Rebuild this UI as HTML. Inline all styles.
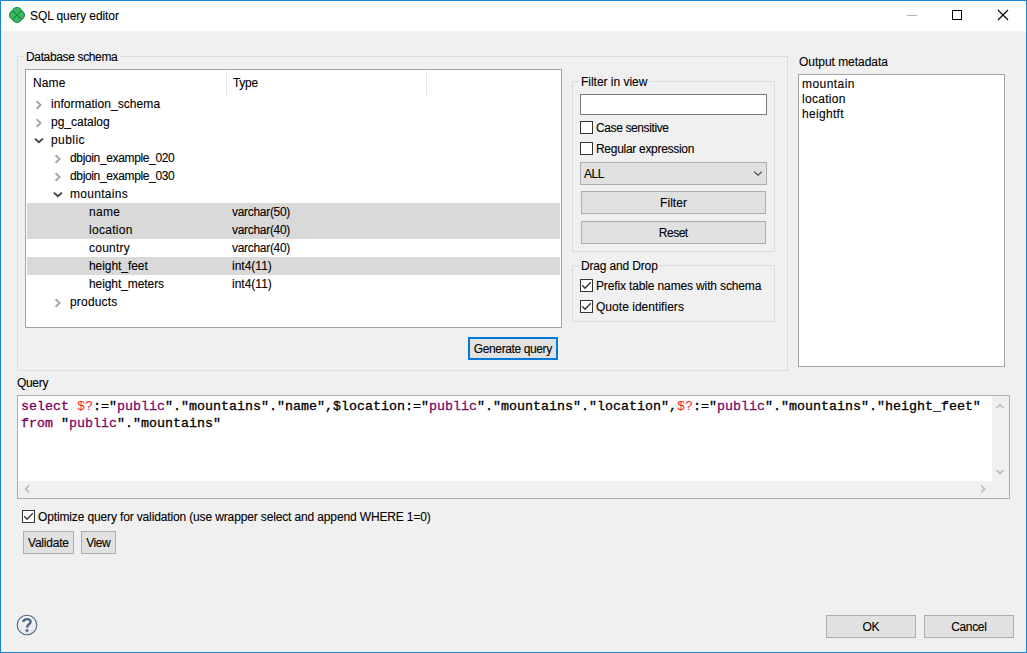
<!DOCTYPE html>
<html><head><meta charset="utf-8"><title>SQL query editor</title>
<style>
html,body{margin:0;padding:0;}
body{width:1027px;height:653px;position:relative;overflow:hidden;background:#f0f0f0;font-family:'Liberation Sans',sans-serif;font-size:12px;color:#000;-webkit-text-stroke:0.1px #000;}
</style></head><body>
<div style="position:absolute;left:1px;top:1px;width:1025px;height:30px;background:#fff"></div>
<div style="position:absolute;left:0px;top:0px;width:1027px;height:1px;background:#1883d7"></div>
<div style="position:absolute;left:0px;top:652px;width:1027px;height:1px;background:#1883d7"></div>
<div style="position:absolute;left:0px;top:0px;width:1px;height:653px;background:#1883d7"></div>
<div style="position:absolute;left:1026px;top:0px;width:1px;height:653px;background:#1883d7"></div>
<svg style="position:absolute;left:9px;top:7px" width="16" height="16" viewBox="0 0 16 16">
<g fill="#0f8a3a"><circle cx="8" cy="5.1" r="5.1"/><circle cx="8" cy="10.9" r="5.1"/><circle cx="5.1" cy="8" r="5.1"/><circle cx="10.9" cy="8" r="5.1"/></g>
<g fill="#3db662"><circle cx="8" cy="5.1" r="4.1"/><circle cx="8" cy="10.9" r="4.1"/><circle cx="5.1" cy="8" r="4.1"/><circle cx="10.9" cy="8" r="4.1"/></g>
<path d="M3.2 3.2 L12.8 12.8 M12.8 3.2 L3.2 12.8" stroke="#0f8a3a" stroke-width="1.1"/>
</svg>
<div style="position:absolute;left:30px;top:9px;font-size:12px;line-height:15px;color:#000;white-space:pre;letter-spacing:-0.093px;">SQL query editor</div>
<div style="position:absolute;left:907px;top:15px;width:10px;height:1px;background:#b4b4b4"></div>
<div style="position:absolute;left:952px;top:10px;width:10px;height:10px;border:1px solid #000;box-sizing:border-box"></div>
<svg style="position:absolute;left:997px;top:9px" width="12" height="12" viewBox="0 0 12 12"><path d="M1 1 L11 11 M11 1 L1 11" stroke="#000" stroke-width="1.1"/></svg>
<div style="position:absolute;left:17px;top:56px;width:7px;height:1px;background:#dcdcdc"></div>
<div style="position:absolute;left:120px;top:56px;width:668px;height:1px;background:#dcdcdc"></div>
<div style="position:absolute;left:17px;top:56px;width:1px;height:315px;background:#dcdcdc"></div>
<div style="position:absolute;left:787px;top:56px;width:1px;height:315px;background:#dcdcdc"></div>
<div style="position:absolute;left:17px;top:370px;width:771px;height:1px;background:#dcdcdc"></div>
<div style="position:absolute;left:26px;top:50px;font-size:12px;line-height:15px;color:#000;white-space:pre;letter-spacing:-0.357px;">Database schema</div>
<div style="position:absolute;left:25px;top:69px;width:537px;height:259px;background:#fff;border:1px solid #a0a3a8;box-sizing:border-box"></div>
<div style="position:absolute;left:226px;top:71px;width:1px;height:24px;background:#e5e5e5"></div>
<div style="position:absolute;left:426px;top:71px;width:1px;height:24px;background:#e5e5e5"></div>
<div style="position:absolute;left:33px;top:76px;font-size:12px;line-height:15px;color:#000;white-space:pre;letter-spacing:0.100px;">Name</div>
<div style="position:absolute;left:233px;top:76px;font-size:12px;line-height:15px;color:#000;white-space:pre;letter-spacing:-0.300px;">Type</div>
<svg style="position:absolute;left:34.0px;top:100px" width="9" height="10" viewBox="0 0 9 10"><path d="M2.6 1.3 L6.6 5 L2.6 8.7" fill="none" stroke="#a6a6a6" stroke-width="1.9"/></svg>
<div style="position:absolute;left:51px;top:97px;font-size:12px;line-height:15px;color:#000;white-space:pre;letter-spacing:0.059px;">information_schema</div>
<svg style="position:absolute;left:34.0px;top:118px" width="9" height="10" viewBox="0 0 9 10"><path d="M2.6 1.3 L6.6 5 L2.6 8.7" fill="none" stroke="#a6a6a6" stroke-width="1.9"/></svg>
<div style="position:absolute;left:51px;top:115px;font-size:12px;line-height:15px;color:#000;white-space:pre;letter-spacing:-0.011px;">pg_catalog</div>
<svg style="position:absolute;left:33.5px;top:137px" width="10" height="8" viewBox="0 0 10 8"><path d="M0.9 1.6 L4.9 5.2 L8.9 1.6" fill="none" stroke="#404040" stroke-width="1.9"/></svg>
<div style="position:absolute;left:51px;top:133px;font-size:12px;line-height:15px;color:#000;white-space:pre;letter-spacing:0.440px;">public</div>
<svg style="position:absolute;left:53.0px;top:154px" width="9" height="10" viewBox="0 0 9 10"><path d="M2.6 1.3 L6.6 5 L2.6 8.7" fill="none" stroke="#a6a6a6" stroke-width="1.9"/></svg>
<div style="position:absolute;left:70px;top:151px;font-size:12px;line-height:15px;color:#000;white-space:pre;letter-spacing:-0.353px;">dbjoin_example_020</div>
<svg style="position:absolute;left:53.0px;top:172px" width="9" height="10" viewBox="0 0 9 10"><path d="M2.6 1.3 L6.6 5 L2.6 8.7" fill="none" stroke="#a6a6a6" stroke-width="1.9"/></svg>
<div style="position:absolute;left:70px;top:169px;font-size:12px;line-height:15px;color:#000;white-space:pre;letter-spacing:-0.353px;">dbjoin_example_030</div>
<svg style="position:absolute;left:52.5px;top:191px" width="10" height="8" viewBox="0 0 10 8"><path d="M0.9 1.6 L4.9 5.2 L8.9 1.6" fill="none" stroke="#404040" stroke-width="1.9"/></svg>
<div style="position:absolute;left:70px;top:187px;font-size:12px;line-height:15px;color:#000;white-space:pre;letter-spacing:0.300px;">mountains</div>
<div style="position:absolute;left:27px;top:203px;width:533px;height:18px;background:#d9d9d9"></div>
<div style="position:absolute;left:89px;top:205px;font-size:12px;line-height:15px;color:#000;white-space:pre;letter-spacing:0.267px;">name</div>
<div style="position:absolute;left:232px;top:205px;font-size:12px;line-height:15px;color:#000;white-space:pre;letter-spacing:-0.300px;">varchar(50)</div>
<div style="position:absolute;left:27px;top:221px;width:533px;height:18px;background:#d9d9d9"></div>
<div style="position:absolute;left:89px;top:223px;font-size:12px;line-height:15px;color:#000;white-space:pre;letter-spacing:0.286px;">location</div>
<div style="position:absolute;left:232px;top:223px;font-size:12px;line-height:15px;color:#000;white-space:pre;letter-spacing:-0.300px;">varchar(40)</div>
<div style="position:absolute;left:89px;top:241px;font-size:12px;line-height:15px;color:#000;white-space:pre;letter-spacing:0.233px;">country</div>
<div style="position:absolute;left:232px;top:241px;font-size:12px;line-height:15px;color:#000;white-space:pre;letter-spacing:-0.300px;">varchar(40)</div>
<div style="position:absolute;left:27px;top:257px;width:533px;height:18px;background:#d9d9d9"></div>
<div style="position:absolute;left:89px;top:259px;font-size:12px;line-height:15px;color:#000;white-space:pre;letter-spacing:-0.060px;">height_feet</div>
<div style="position:absolute;left:232px;top:259px;font-size:12px;line-height:15px;color:#000;white-space:pre;letter-spacing:0.000px;">int4(11)</div>
<div style="position:absolute;left:89px;top:277px;font-size:12px;line-height:15px;color:#000;white-space:pre;letter-spacing:-0.083px;">height_meters</div>
<div style="position:absolute;left:232px;top:277px;font-size:12px;line-height:15px;color:#000;white-space:pre;letter-spacing:0.000px;">int4(11)</div>
<svg style="position:absolute;left:53.0px;top:298px" width="9" height="10" viewBox="0 0 9 10"><path d="M2.6 1.3 L6.6 5 L2.6 8.7" fill="none" stroke="#a6a6a6" stroke-width="1.9"/></svg>
<div style="position:absolute;left:70px;top:295px;font-size:12px;line-height:15px;color:#000;white-space:pre;letter-spacing:0.186px;">products</div>
<div style="position:absolute;left:572px;top:81px;width:7px;height:1px;background:#dcdcdc"></div>
<div style="position:absolute;left:649px;top:81px;width:126px;height:1px;background:#dcdcdc"></div>
<div style="position:absolute;left:572px;top:81px;width:1px;height:171px;background:#dcdcdc"></div>
<div style="position:absolute;left:774px;top:81px;width:1px;height:171px;background:#dcdcdc"></div>
<div style="position:absolute;left:572px;top:251px;width:203px;height:1px;background:#dcdcdc"></div>
<div style="position:absolute;left:581px;top:75px;font-size:12px;line-height:15px;color:#000;white-space:pre;letter-spacing:-0.023px;">Filter in view</div>
<div style="position:absolute;left:580px;top:94px;width:187px;height:21px;background:#fff;border:1px solid #7a7a7a;box-sizing:border-box"></div>
<div style="position:absolute;left:580px;top:121px;width:13px;height:13px;background:#fff;border:1px solid #333;box-sizing:border-box"></div>
<div style="position:absolute;left:596px;top:121px;font-size:12px;line-height:15px;color:#000;white-space:pre;letter-spacing:-0.385px;">Case sensitive</div>
<div style="position:absolute;left:580px;top:142px;width:13px;height:13px;background:#fff;border:1px solid #333;box-sizing:border-box"></div>
<div style="position:absolute;left:596px;top:142px;font-size:12px;line-height:15px;color:#000;white-space:pre;letter-spacing:-0.294px;">Regular expression</div>
<div style="position:absolute;left:580px;top:162px;width:187px;height:23px;background:#e1e1e1;border:1px solid #adadad;box-sizing:border-box"></div>
<div style="position:absolute;left:584px;top:167px;font-size:12px;line-height:15px;color:#000;white-space:pre;letter-spacing:-0.500px;">ALL</div>
<svg style="position:absolute;left:753px;top:170px" width="10" height="8" viewBox="0 0 10 8"><path d="M1.2 1.6 L5 5.3 L8.8 1.6" fill="none" stroke="#3a3a3a" stroke-width="1.1"/></svg>
<div style="position:absolute;left:581px;top:191px;width:185px;height:23px;background:#e1e1e1;border:1px solid #adadad;box-sizing:border-box"></div>
<div style="position:absolute;left:581px;top:196px;width:185px;text-align:center;font-size:12px;line-height:15px;color:#000;white-space:pre;letter-spacing:0.020px;text-indent:0.020px">Filter</div>
<div style="position:absolute;left:581px;top:221px;width:185px;height:23px;background:#e1e1e1;border:1px solid #adadad;box-sizing:border-box"></div>
<div style="position:absolute;left:581px;top:226px;width:185px;text-align:center;font-size:12px;line-height:15px;color:#000;white-space:pre;letter-spacing:-0.500px;text-indent:-0.500px">Reset</div>
<div style="position:absolute;left:572px;top:265px;width:7px;height:1px;background:#dcdcdc"></div>
<div style="position:absolute;left:659px;top:265px;width:116px;height:1px;background:#dcdcdc"></div>
<div style="position:absolute;left:572px;top:265px;width:1px;height:57px;background:#dcdcdc"></div>
<div style="position:absolute;left:774px;top:265px;width:1px;height:57px;background:#dcdcdc"></div>
<div style="position:absolute;left:572px;top:321px;width:203px;height:1px;background:#dcdcdc"></div>
<div style="position:absolute;left:581px;top:259px;font-size:12px;line-height:15px;color:#000;white-space:pre;letter-spacing:-0.158px;">Drag and Drop</div>
<div style="position:absolute;left:580px;top:279px;width:13px;height:13px;background:#fff;border:1px solid #333;box-sizing:border-box"></div>
<svg style="position:absolute;left:580px;top:279px" width="13" height="13" viewBox="0 0 13 13"><path d="M2.2 6.3 L5 9.2 L10.8 3.2" fill="none" stroke="#333" stroke-width="1.3"/></svg>
<div style="position:absolute;left:596px;top:279px;font-size:12px;line-height:15px;color:#000;white-space:pre;letter-spacing:-0.138px;">Prefix table names with schema</div>
<div style="position:absolute;left:580px;top:300px;width:13px;height:13px;background:#fff;border:1px solid #333;box-sizing:border-box"></div>
<svg style="position:absolute;left:580px;top:300px" width="13" height="13" viewBox="0 0 13 13"><path d="M2.2 6.3 L5 9.2 L10.8 3.2" fill="none" stroke="#333" stroke-width="1.3"/></svg>
<div style="position:absolute;left:596px;top:300px;font-size:12px;line-height:15px;color:#000;white-space:pre;letter-spacing:0.031px;">Quote identifiers</div>
<div style="position:absolute;left:468px;top:337px;width:90px;height:23px;background:#e1e1e1;border:2px solid #0078d7;box-sizing:border-box"></div>
<div style="position:absolute;left:468px;top:342px;width:90px;text-align:center;font-size:12px;line-height:15px;color:#000;white-space:pre;letter-spacing:-0.385px;text-indent:-0.385px">Generate query</div>
<div style="position:absolute;left:799px;top:55px;font-size:12px;line-height:15px;color:#000;white-space:pre;letter-spacing:-0.029px;">Output metadata</div>
<div style="position:absolute;left:798px;top:74px;width:207px;height:293px;background:#fff;border:1px solid #a0a3a8;box-sizing:border-box"></div>
<div style="position:absolute;left:802px;top:77px;font-size:12px;line-height:15px;color:#000;white-space:pre;letter-spacing:0.443px;">mountain</div>
<div style="position:absolute;left:802px;top:92px;font-size:12px;line-height:15px;color:#000;white-space:pre;letter-spacing:0.286px;">location</div>
<div style="position:absolute;left:802px;top:107px;font-size:12px;line-height:15px;color:#000;white-space:pre;letter-spacing:0.314px;">heightft</div>
<div style="position:absolute;left:17px;top:376px;font-size:12px;line-height:15px;color:#000;white-space:pre;letter-spacing:-0.325px;">Query</div>
<div style="position:absolute;left:17px;top:395px;width:993px;height:104px;background:#fff;border:1px solid #adadad;box-sizing:border-box"></div>
<div style="position:absolute;left:992px;top:396px;width:17px;height:85px;background:#f0f0f0"></div>
<div style="position:absolute;left:18px;top:481px;width:991px;height:17px;background:#f0f0f0"></div>
<svg style="position:absolute;left:995px;top:401px" width="10" height="10" viewBox="0 0 10 10"><path d="M1.6 7 L5 3.6 L8.4 7" fill="none" stroke="#bcbcbc" stroke-width="1.7"/></svg>
<svg style="position:absolute;left:995px;top:467px" width="10" height="10" viewBox="0 0 10 10"><path d="M1.6 3.2 L5 6.6 L8.4 3.2" fill="none" stroke="#bcbcbc" stroke-width="1.7"/></svg>
<svg style="position:absolute;left:22px;top:484px" width="10" height="10" viewBox="0 0 10 10"><path d="M7 1.6 L3.6 5 L7 8.4" fill="none" stroke="#bcbcbc" stroke-width="1.7"/></svg>
<svg style="position:absolute;left:978px;top:484px" width="10" height="10" viewBox="0 0 10 10"><path d="M3.2 1.6 L6.6 5 L3.2 8.4" fill="none" stroke="#bcbcbc" stroke-width="1.7"/></svg>
<div style="position:absolute;left:21px;top:398px;font-family:'Liberation Mono',monospace;font-weight:normal;-webkit-text-stroke:0.3px currentColor;font-size:13.333px;line-height:17px;white-space:pre;color:#000"><span style="color:#7f0055">select</span> <span style="color:#ff1a1a;-webkit-text-stroke:0">$?</span>:=&quot;<span style="color:#7f0a60">public</span>&quot;.&quot;mountains&quot;.&quot;name&quot;,$location:=&quot;<span style="color:#7f0a60">public</span>&quot;.&quot;mountains&quot;.&quot;location&quot;,<span style="color:#ff1a1a;-webkit-text-stroke:0">$?</span>:=&quot;<span style="color:#7f0a60">public</span>&quot;.&quot;mountains&quot;.&quot;height_feet&quot;<br><span style="color:#7f0055">from</span> &quot;<span style="color:#7f0a60">public</span>&quot;.&quot;mountains&quot;</div>
<div style="position:absolute;left:22px;top:510px;width:13px;height:13px;background:#fff;border:1px solid #333;box-sizing:border-box"></div>
<svg style="position:absolute;left:22px;top:510px" width="13" height="13" viewBox="0 0 13 13"><path d="M2.2 6.3 L5 9.2 L10.8 3.2" fill="none" stroke="#333" stroke-width="1.3"/></svg>
<div style="position:absolute;left:38px;top:510px;font-size:12px;line-height:15px;color:#000;white-space:pre;letter-spacing:-0.139px;">Optimize query for validation (use wrapper select and append WHERE 1=0)</div>
<div style="position:absolute;left:23px;top:531px;width:51px;height:23px;background:#e1e1e1;border:1px solid #adadad;box-sizing:border-box"></div>
<div style="position:absolute;left:23px;top:536px;width:51px;text-align:center;font-size:12px;line-height:15px;color:#000;white-space:pre;letter-spacing:-0.214px;text-indent:-0.214px">Validate</div>
<div style="position:absolute;left:81px;top:531px;width:35px;height:23px;background:#e1e1e1;border:1px solid #adadad;box-sizing:border-box"></div>
<div style="position:absolute;left:81px;top:536px;width:35px;text-align:center;font-size:12px;line-height:15px;color:#000;white-space:pre;letter-spacing:-0.467px;text-indent:-0.467px">View</div>
<svg style="position:absolute;left:16px;top:614px" width="22" height="22" viewBox="0 0 22 22">
<defs><linearGradient id="hg" x1="0" y1="0" x2="0" y2="1"><stop offset="0" stop-color="#fafafa"/><stop offset="1" stop-color="#e2e2e2"/></linearGradient></defs>
<circle cx="11" cy="11" r="9.8" fill="url(#hg)" stroke="#4d6487" stroke-width="1.1"/>
<path d="M7.3 8.0 C7.1 4.3 14.6 4.2 14.6 7.7 C14.6 10.2 11.1 10.3 11.0 13.6" fill="none" stroke="#4d6487" stroke-width="2.4"/>
<circle cx="11" cy="16.6" r="1.45" fill="#4d6487"/>
</svg>
<div style="position:absolute;left:826px;top:615px;width:90px;height:23px;background:#e1e1e1;border:1px solid #adadad;box-sizing:border-box"></div>
<div style="position:absolute;left:826px;top:620px;width:90px;text-align:center;font-size:12px;line-height:15px;color:#000;white-space:pre;letter-spacing:-0.500px;text-indent:-0.500px">OK</div>
<div style="position:absolute;left:924px;top:615px;width:90px;height:23px;background:#e1e1e1;border:1px solid #adadad;box-sizing:border-box"></div>
<div style="position:absolute;left:924px;top:620px;width:90px;text-align:center;font-size:12px;line-height:15px;color:#000;white-space:pre;letter-spacing:-0.340px;text-indent:-0.340px">Cancel</div>
</body></html>
